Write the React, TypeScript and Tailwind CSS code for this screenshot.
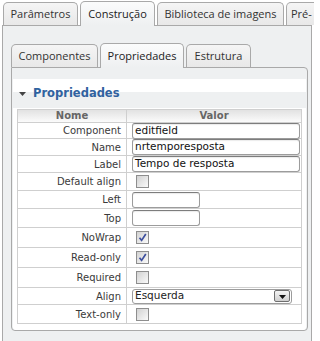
import type { ReactNode } from 'react'

type Row = {
  label: string
  h: string
  kind: 'text' | 'short' | 'check' | 'select'
  value?: string
  checked?: boolean
}

const rows: Row[] = [
  { label: 'Component', h: 'h-[16px]', kind: 'text', value: 'editfield' },
  { label: 'Name', h: 'h-[17px]', kind: 'text', value: 'nrtemporesposta' },
  { label: 'Label', h: 'h-[17px]', kind: 'text', value: 'Tempo de resposta' },
  { label: 'Default align', h: 'h-[18px]', kind: 'check' },
  { label: 'Left', h: 'h-[18px]', kind: 'short' },
  { label: 'Top', h: 'h-[19px]', kind: 'short' },
  { label: 'NoWrap', h: 'h-[20px]', kind: 'check', checked: true },
  { label: 'Read-only', h: 'h-[20px]', kind: 'check', checked: true },
  { label: 'Required', h: 'h-[20px]', kind: 'check' },
  { label: 'Align', h: 'h-[17px]', kind: 'select', value: 'Esquerda' },
  { label: 'Text-only', h: 'h-[19px]', kind: 'check' },
]

function Tab({ children, active, w }: { children: ReactNode; active?: boolean; w: string }) {
  if (active) {
    return (
      <div
        className={`${w} relative z-10 -mb-px flex h-[25px] shrink-0 items-center justify-center rounded-t-[5px] border border-b-0 border-[#a9a9a9] bg-linear-to-b from-[#fbfcfc] to-[#eef0f1] text-[#222]`}
      >
        {children}
      </div>
    )
  }
  return (
    <div
      className={`${w} flex h-[23px] shrink-0 items-center justify-center rounded-t-[5px] border border-b-0 border-[#a9a9a9] bg-linear-to-b from-[#f5f5f5] to-[#e8e8e8] text-[#333]`}
    >
      {children}
    </div>
  )
}

function Check({ checked }: { checked?: boolean }) {
  return (
    <span className="flex h-[13px] w-[13px] items-center justify-center border border-[#8e8e8e] bg-linear-to-br from-[#d2d2d2] to-[#fafafa]">
      {checked && (
        <svg width="9" height="9" viewBox="0 0 9 9">
          <path d="M1.5 4.8 L3.6 7.4 L7.8 1" fill="none" stroke="#3d4f9e" strokeWidth="1.7" />
        </svg>
      )}
    </span>
  )
}

function Value({ row }: { row: Row }) {
  if (row.kind === 'text') {
    return (
      <div className="flex h-[16px] w-[168px] items-center rounded-[3px] border border-[#9c9c9c] border-t-[#7d7d7d] bg-white pl-[2px] text-[10.5px] text-[#111] shadow-[inset_0_1px_1px_rgba(0,0,0,0.08)]">
        {row.value}
      </div>
    )
  }
  if (row.kind === 'short') {
    return (
      <div className="h-[16px] w-[68px] rounded-[3px] border border-[#9c9c9c] border-t-[#7d7d7d] bg-white shadow-[inset_0_1px_1px_rgba(0,0,0,0.08)]" />
    )
  }
  if (row.kind === 'check') {
    return (
      <div className="pl-[4px]">
        <Check checked={row.checked} />
      </div>
    )
  }
  return (
    <div className="flex h-[15px] w-[160px] items-center justify-between rounded-[3px] border border-[#9c9c9c] bg-white pl-[2px] pr-[1px] text-[10.5px] text-[#222]">
      <span>{row.value}</span>
      <span className="flex h-[12px] w-[16px] items-end justify-center rounded-[2px] border border-[#6f6f6f] bg-linear-to-b from-[#f4f4f4] to-[#cfcfcf] pb-[2px]">
        <svg width="7" height="4" viewBox="0 0 7 4">
          <path d="M0 0 H7 L3.5 4 Z" fill="#111" />
        </svg>
      </span>
    </div>
  )
}

export default function App() {
  return (
    <div className="h-[341px] w-[314px] overflow-hidden bg-white font-['DejaVu_Sans',sans-serif]">
      <div className="flex h-[25px] items-end gap-[2px] whitespace-nowrap pl-[3px] font-['Open_Sans',sans-serif] text-[11px]">
        <Tab w="w-[75px]">Parâmetros</Tab>
        <Tab w="w-[75px]" active>
          Construção
        </Tab>
        <Tab w="w-[127px]">Biblioteca de imagens</Tab>
        <Tab w="w-[40px]">
          <span className="w-full pl-[4px]">Pré-</span>
        </Tab>
      </div>

      <div className="ml-[2px] flex h-[330px] w-[310px] flex-col border border-[#a9a9a9] bg-[#eef0f1] pl-[8px] pt-[16px]">
        <div className="flex h-[25px] items-end gap-[2px] font-['Open_Sans',sans-serif] text-[11px]">
          <Tab w="w-[87px]">Componentes</Tab>
          <Tab w="w-[84px]" active>
            Propriedades
          </Tab>
          <Tab w="w-[65px]">Estrutura</Tab>
        </div>

        <div className="flex h-[264px] w-[297px] flex-col rounded-b-[4px] rounded-tr-[4px] border border-[#a9a9a9] bg-[#eef0f1] px-[1px] pt-[11px]">
          <div className="flex-1 rounded-b-[3px] bg-white">
            <div className="flex h-[29px] items-center gap-[7px] bg-linear-to-b from-white from-[45%] to-[#eef0f1] to-[45%] pl-[6px]">
              <svg width="7" height="4" viewBox="0 0 7 4">
                <path d="M0 0 H7 L3.5 4 Z" fill="#444" />
              </svg>
              <span className="text-[11.5px] font-bold text-[#30629f]">Propriedades</span>
            </div>

            <div className="pl-[4px] pt-px">
              <div className="w-[285px] border border-t-0 border-[#cfcfcf] text-[10px]">
                <div className="flex h-[13px] border-t border-[#cfcfcf] bg-linear-to-b from-[#e2e2e2] to-[#fbfbfb] font-bold leading-none text-[#666]">
                  <div className="flex w-[109px] items-center justify-center border-r border-[#cfcfcf]">Nome</div>
                  <div className="flex flex-1 items-center justify-center">Valor</div>
                </div>
                {rows.map((row) => (
                  <div key={row.label} className={`${row.h} flex border-t border-[#cfcfcf]`}>
                    <div className="flex w-[109px] items-center justify-end border-r border-[#cfcfcf] pr-[5px] text-[#3a3a3a]">
                      {row.label}
                    </div>
                    <div className="flex flex-1 items-center pl-[5px]">
                      <Value row={row} />
                    </div>
                  </div>
                ))}
              </div>
            </div>
          </div>
        </div>
      </div>
    </div>
  )
}
